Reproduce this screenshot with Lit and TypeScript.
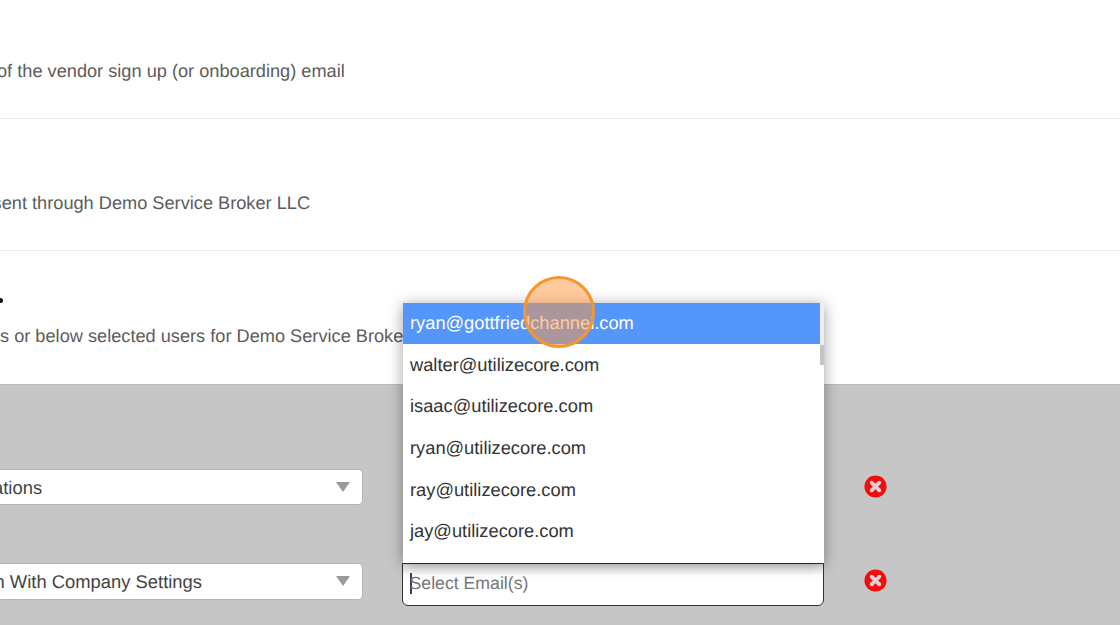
import { LitElement, html, css } from "lit";
import { customElement } from "lit/decorators.js";

const OPTIONS = [
  "ryan@gottfriedchannel.com",
  "walter@utilizecore.com",
  "isaac@utilizecore.com",
  "ryan@utilizecore.com",
  "ray@utilizecore.com",
  "jay@utilizecore.com",
];

@customElement("app-root")
export class AppRoot extends LitElement {
  static styles = css`
    :host {
      display: block;
      position: relative;
      width: 1120px;
      height: 625px;
      overflow: hidden;
      background: #fff;
      font-family: "Liberation Sans", Arial, sans-serif;
      font-size: 18px;
      text-rendering: geometricPrecision;
      color: #5c5c5c;
    }
    .row {
      box-sizing: border-box;
      height: 132px;
      border-bottom: 1px solid #ececec;
      display: flex;
      flex-direction: column;
      justify-content: flex-end;
      padding-bottom: 36px;
      white-space: nowrap;
    }
    .row.first {
      height: 119px;
    }
    .row.last {
      height: 133px;
      border-bottom: 0;
      position: relative;
      padding-bottom: 37px;
    }
    .desc {
      line-height: 22px;
      font-size: 18.2px;
    }
    .d1 {
      margin-left: -3px;
    }
    .d2 {
      margin-left: -7.4px;
    }
    .d3 {
      margin-left: 0;
    }
    .tick {
      position: absolute;
      left: 0;
      top: 47px;
      width: 3px;
      height: 5px;
      border-radius: 0 3px 3px 0;
      background: #111;
    }
    .panel {
      height: 241px;
      background: #c6c6c6;
      border-top: 1px solid #bcbcbc;
      display: grid;
      grid-template-columns: 363px 461px 1fr;
      grid-template-rows: 94px 42px;
      padding-top: 84px;
      box-sizing: border-box;
      align-items: start;
    }
    .select {
      box-sizing: border-box;
      height: 36px;
      padding-top: 1px;
      background: #fff;
      border: 1px solid #b4b4b4;
      border-left: 0;
      border-radius: 0 5px 5px 0;
      display: flex;
      align-items: center;
      justify-content: space-between;
      padding-right: 12px;
      font-size: 18.4px;
      color: #444;
      white-space: nowrap;
      overflow: hidden;
    }
    .select.lower {
      height: 37px;
      grid-column: 1;
      grid-row: 2;
    }
    .arrow {
      width: 0;
      height: 0;
      margin-top: -2px;
      border-left: 7px solid transparent;
      border-right: 7px solid transparent;
      border-top: 10px solid #9a9a9a;
    }
    .s1 {
      margin-left: -7px;
    }
    .s2 {
      margin-left: -5.5px;
    }
    .remove {
      display: block;
      width: 23px;
      height: 23px;
      margin: 6px 0 0 39.5px;
    }
    .slot-a {
      grid-column: 3;
      grid-row: 1;
    }
    .slot-b {
      grid-column: 3;
      grid-row: 2;
    }
    .input {
      box-sizing: border-box;
      margin-left: 39px;
      width: 422px;
      height: 43px;
      padding-bottom: 2px;
      background: linear-gradient(#e4e4e4, #fff 11px);
      border: 1px solid #333;
      border-radius: 0 0 6px 6px;
      display: flex;
      align-items: center;
      padding-left: 7px;
      font-size: 17.7px;
      color: #777;
      grid-column: 2;
      grid-row: 2;
    }
    .caret {
      width: 2px;
      height: 21px;
      background: #3c4250;
      margin-right: -2.5px;
    }
    .menu {
      position: absolute;
      left: 403px;
      top: 303px;
      width: 421px;
      height: 260px;
      background: #fff;
      box-shadow: 0 2px 14px rgba(0, 0, 0, 0.38);
      overflow: hidden;
      font-size: 18.3px;
      color: #333;
    }
    .option {
      box-sizing: border-box;
      height: 41.6px;
      display: flex;
      align-items: center;
      padding: 0 0 1px 7px;
    }
    .option.active {
      background: #5596fb;
      color: #fff;
      width: 417px;
      height: 41px;
      margin-bottom: 0.6px;
    }
    .thumb {
      position: absolute;
      right: 0;
      top: 42px;
      width: 4px;
      height: 20px;
      background: #c4c4c4;
    }
    .track {
      position: absolute;
      right: 0;
      top: 0;
      width: 4px;
      height: 42px;
      background: #eee;
    }
    .spot {
      position: absolute;
      left: 523px;
      top: 276px;
      width: 72px;
      height: 72px;
      box-sizing: border-box;
      border-radius: 50%;
      border: 3px solid #f7962f;
      background: rgba(255, 150, 60, 0.5);
    }
  `;

  private removeIcon() {
    return html`<svg class="remove" viewBox="0 0 24 24" aria-hidden="true">
      <circle cx="12" cy="12" r="11.5" fill="#f10d0d"></circle>
      <path d="M8 8l8 8M16 8l-8 8" stroke="#d9d4d4" stroke-width="4" stroke-linecap="round"></path>
    </svg>`;
  }

  render() {
    return html`
      <div class="row first"><div class="desc d1">of the vendor sign up (or onboarding) email</div></div>
      <div class="row"><div class="desc d2">sent through Demo Service Broker LLC</div></div>
      <div class="row last">
        <span class="tick"></span>
        <div class="desc d3">s or below selected users for Demo Service Broker</div>
      </div>
      <div class="panel">
        <div class="select"><span class="s1">ations</span><span class="arrow"></span></div>
        <div class="slot-a">${this.removeIcon()}</div>
        <div class="select lower"><span class="s2">n With Company Settings</span><span class="arrow"></span></div>
        <div class="input"><span class="caret"></span>Select Email(s)</div>
        <div class="slot-b">${this.removeIcon()}</div>
      </div>
      <div class="menu">
        ${OPTIONS.map(
          (o, i) => html`<div class="option ${i === 0 ? "active" : ""}">${o}</div>`
        )}
        <span class="track"></span>
        <span class="thumb"></span>
      </div>
      <div class="spot"></div>
    `;
  }
}
